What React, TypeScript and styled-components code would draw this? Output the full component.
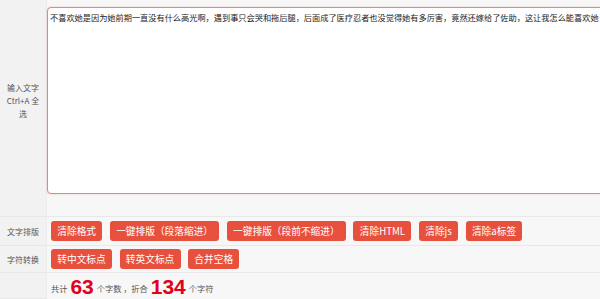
import React from "react";
import styled, { createGlobalStyle } from "styled-components";

const Global = createGlobalStyle`
  html, body { margin: 0; padding: 0; background: #f7f7f7; overflow: hidden; }
  body { font-family: "Noto Sans CJK SC", "Noto Sans", sans-serif; }
`;

const Form = styled.div`
  width: 660px;
  display: grid;
  grid-template-columns: 47px 1fr;
  background: #f7f7f7;
`;

const Label = styled.div<{ $pb?: number }>`
  background: #f2f2f2;
  border-right: 1px solid #ececec;
  border-bottom: 1px solid #e8e8e8;
  display: flex;
  align-items: center;
  justify-content: center;
  text-align: center;
  font-size: 8px;
  line-height: 13px;
  color: #555;
  padding: 0 4px ${(p) => p.$pb ?? 0}px;
  box-sizing: border-box;
`;

const Cell = styled.div<{ $h: number }>`
  height: ${(p) => p.$h}px;
  box-sizing: border-box;
  border-bottom: 1px solid #e8e8e8;
  display: flex;
  align-items: center;
  gap: 7.5px;
  padding-left: 4px;
`;

const EditCell = styled.div`
  height: 217px;
  box-sizing: border-box;
  border-bottom: 1px solid #e8e8e8;
  padding: 7px 0 22px 0;
`;

const Area = styled.textarea`
  display: block;
  width: 100%;
  height: 100%;
  box-sizing: border-box;
  resize: none;
  overflow: hidden;
  white-space: pre;
  border: 1.5px solid #de8a80;
  border-radius: 4px;
  box-shadow: 0 0 2px rgba(222, 100, 80, 0.35);
  background: #fff;
  padding: 2px 2px;
  font-family: "Noto Sans CJK SC", sans-serif;
  font-size: 8.2px;
  line-height: 14px;
  color: #222;
  outline: none;
`;

const Btn = styled.button`
  height: 20px;
  padding: 0 6.3px;
  border: none;
  border-radius: 3px;
  background: #e8503e;
  color: #fff;
  font-family: "Noto Sans CJK SC", sans-serif;
  font-size: 9.7px;
  line-height: 20px;
  white-space: nowrap;
  cursor: pointer;
`;

const Count = styled.div`
  height: 26px;
  display: flex;
  align-items: center;
  padding: 1px 0 0 4px;
  font-size: 8.2px;
  color: #555;
  box-sizing: border-box;
`;

const Num = styled.span`
  font-family: "Liberation Sans", Arial, sans-serif;
  font-weight: bold;
  font-size: 21px;
  line-height: 20px;
  color: #e0001b;
  margin: 0 3px;
`;

const Small = styled.span`
  line-height: 14px;
  padding-top: 3px;
  white-space: pre;
`;

const text =
  "不喜欢她是因为她前期一直没有什么高光啊，遇到事只会哭和拖后腿，后面成了医疗忍者也没觉得她有多厉害，竟然还嫁给了佐助，这让我怎么能喜欢她";

const row1 = ["清除格式", "一键排版（段落缩进）", "一键排版（段前不缩进）", "清除HTML", "清除js", "清除a标签"];
const row2 = ["转中文标点", "转英文标点", "合并空格"];

export default function App() {
  return (
    <>
      <Global />
      <Form>
        <Label $pb={15}>
          <span>
            输入文字
            <br />
            Ctrl+A 全
            <br />
            选
          </span>
        </Label>
        <EditCell>
          <Area wrap="off" defaultValue={text} spellCheck={false} />
        </EditCell>
        <Label>文字排版</Label>
        <Cell $h={29}>
          {row1.map((b) => (
            <Btn key={b}>{b}</Btn>
          ))}
        </Cell>
        <Label>字符转换</Label>
        <Cell $h={27}>
          {row2.map((b) => (
            <Btn key={b}>{b}</Btn>
          ))}
        </Cell>
        <Label />
        <Count>
          <Small>共计</Small>
          <Num>63</Num>
          <Small>个字数 ，折合</Small>
          <Num>134</Num>
          <Small>个字符</Small>
        </Count>
      </Form>
    </>
  );
}
